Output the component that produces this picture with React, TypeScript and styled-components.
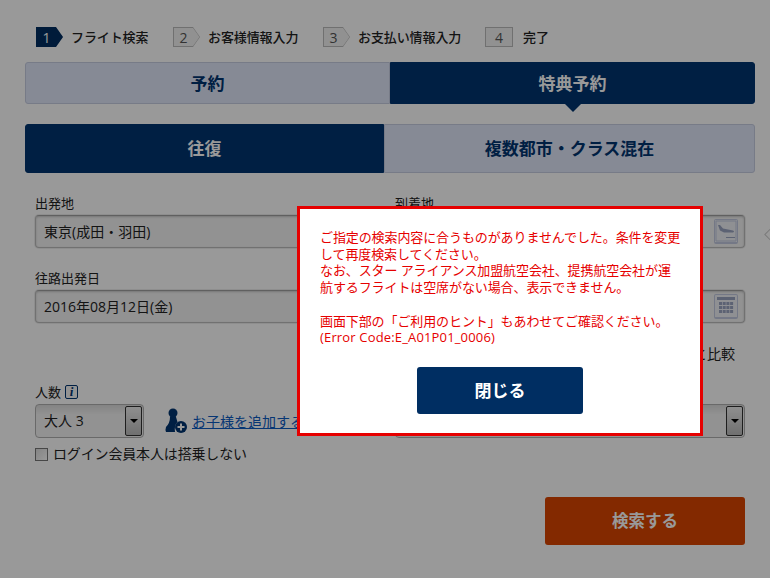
import React from 'react'
import styled, { createGlobalStyle } from 'styled-components'

const GlobalStyle = createGlobalStyle`
    html, body {
        margin: 0;
        padding: 0;
        height: 578px;
        overflow: hidden;
        background: #fff;
        font-family: "Open Sans", "Noto Sans CJK JP", sans-serif;
        color: #222;
    }
    * {
        box-sizing: border-box;
    }
`

const Page = styled.div`
    width: 770px;
    height: 578px;
    padding: 27px 15px 0 25px;
`

const Stepper = styled.div`
    display: flex;
    align-items: center;
    height: 20px;
    padding-left: 11px;
    margin-bottom: 15px;
`

const Step = styled.div<{ $width: number }>`
    display: flex;
    align-items: center;
    width: ${(props) => props.$width}px;
`

const StepLabel = styled.span`
    margin-top: -2px;
    font-size: 13px;
    font-weight: 500;
    letter-spacing: -0.1px;
    color: #222;
`

const arrowShape = 'polygon(0 0, 20px 0, 27px 50%, 20px 100%, 0 100%)'
const innerShape = 'polygon(0 0, 19px 0, 25.5px 50%, 19px 100%, 0 100%)'

const StepBadge = styled.span<{ $active?: boolean }>`
    position: relative;
    flex: none;
    display: flex;
    align-items: center;
    justify-content: center;
    width: 27px;
    height: 20px;
    padding-right: 6px;
    margin-right: 8px;
    font-size: 14px;
    background: ${(props) => (props.$active ? '#002e62' : '#bbb')};
    color: ${(props) => (props.$active ? '#fff' : '#555')};
    clip-path: ${arrowShape};
    &::before {
        content: '';
        position: absolute;
        inset: 1px 0 1px 1px;
        background: ${(props) => (props.$active ? '#002e62' : '#f2f2f2')};
        clip-path: ${innerShape};
    }
`

const LastBadge = styled.span`
    flex: none;
    display: flex;
    align-items: center;
    justify-content: center;
    width: 28px;
    height: 20px;
    margin-right: 10px;
    font-size: 14px;
    background: #f2f2f2;
    color: #555;
    border: 1px solid #bbb;
`

const StepNumber = styled.span`
    position: relative;
`

const TabRow = styled.div<{ $height: number; $split: number; $gap: number }>`
    display: grid;
    grid-template-columns: ${(props) => props.$split}px 1fr;
    height: ${(props) => props.$height}px;
    margin-bottom: ${(props) => props.$gap}px;
`

const Tab = styled.div<{ $active?: boolean; $side: 'left' | 'right' }>`
    position: relative;
    display: flex;
    align-items: center;
    justify-content: center;
    padding-bottom: 2px;
    font-size: 17px;
    font-weight: 700;
    background: ${(props) => (props.$active ? '#003470' : '#e0e6f8')};
    color: ${(props) => (props.$active ? '#fff' : '#003470')};
    border: 1px solid ${(props) => (props.$active ? '#003470' : '#c6cde2')};
    border-radius: ${(props) => (props.$side === 'left' ? '3px 0 0 3px' : '0 3px 3px 0')};
`

const TabPointer = styled.span`
    position: absolute;
    left: 50%;
    bottom: -9px;
    margin-left: -8px;
    border-left: 8px solid transparent;
    border-right: 8px solid transparent;
    border-top: 8px solid #003470;
`

const Form = styled.div`
    display: grid;
    grid-template-columns: 320px 350px;
    column-gap: 40px;
    padding: 0 10px;
`

const FieldBlock = styled.div`
    height: 75px;
`

const Label = styled.div`
    display: flex;
    align-items: center;
    gap: 4px;
    height: 18px;
    margin-bottom: 3px;
    font-size: 13px;
    line-height: 18px;
    color: #222;
`

const InfoMark = styled.span`
    display: flex;
    align-items: center;
    justify-content: center;
    width: 13px;
    height: 14px;
    border: 1.5px solid #003470;
    border-radius: 2px;
    background: #f5f5f5;
    color: #003470;
    font-family: "Liberation Serif", serif;
    font-style: italic;
    font-weight: 700;
    font-size: 13px;
`

const Input = styled.div`
    display: flex;
    align-items: center;
    justify-content: space-between;
    height: 33px;
    padding: 0 3px 2px 8px;
    border: 1px solid #bcbcbc;
    border-top-color: #a0a0a0;
    border-radius: 4px;
    background: #f3f3f3;
    box-shadow: inset 0 1px 2px rgba(0, 0, 0, 0.18), 0 0 0 1px rgba(0, 0, 0, 0.07);
    font-size: 14px;
    color: #222;
`

const IconButton = styled.span`
    display: flex;
    align-items: center;
    justify-content: center;
    width: 24px;
    height: 25px;
    margin: 2px 3px 0 0;
    border: 1px solid #c2c9df;
    border-bottom-width: 2px;
    border-radius: 2px;
    background: #eef0f6;
`

const CompareRow = styled.div`
    grid-column: 1 / 3;
    height: 39px;
    padding-right: 10px;
    text-align: right;
    font-size: 14px;
    line-height: 20px;
    color: #222;
`

const PassengerRow = styled.div`
    display: flex;
    align-items: center;
    gap: 21px;
    width: 320px;
    white-space: nowrap;
`

const SelectBox = styled.div<{ $width: string }>`
    display: flex;
    align-items: center;
    justify-content: space-between;
    width: ${(props) => props.$width};
    height: 34px;
    padding: 1px 1px 1px 8px;
    border: 1px solid #b0b0b0;
    border-radius: 4px;
    background: linear-gradient(#dcdcdc, #f4f4f4 30%, #f4f4f4);
    font-size: 14px;
    color: #222;
`

const SelectArrow = styled.span`
    display: flex;
    align-items: center;
    justify-content: center;
    width: 17px;
    height: 100%;
    border: 1px solid #333;
    border-radius: 2px;
    background: linear-gradient(#eee, #bbb);
    &::after {
        content: '';
        border-left: 4px solid transparent;
        border-right: 4px solid transparent;
        border-top: 4px solid #000;
    }
`

const SelectText = styled.span`
    margin-top: -2px;
`

const AddChild = styled.span`
    display: flex;
    align-items: center;
    gap: 5px;
`

const AddChildLink = styled.a`
    font-size: 14px;
    color: #0a5ac2;
    text-decoration: underline;
`

const CheckRow = styled.label`
    display: flex;
    align-items: center;
    gap: 5px;
    margin-top: 6px;
    font-size: 14px;
    line-height: 20px;
    letter-spacing: -0.15px;
    color: #222;
`

const CheckBox = styled.span`
    width: 13px;
    height: 13px;
    border: 1px solid #777;
    background: linear-gradient(135deg, #ddd, #fff);
`

const SearchRow = styled.div`
    display: flex;
    justify-content: flex-end;
    padding: 33px 10px 0 0;
`

const SearchButton = styled.div`
    display: flex;
    align-items: center;
    justify-content: center;
    width: 200px;
    height: 48px;
    padding-bottom: 2px;
    border-radius: 3px;
    background: #da4500;
    color: #fff;
    font-size: 16.5px;
    font-weight: 700;
`

const SideChevron = styled.span`
    position: absolute;
    left: 766px;
    top: 230px;
    width: 9px;
    height: 9px;
    transform: rotate(45deg);
    border: 1px solid #ccc;
    background: #fff;
`

const Overlay = styled.div`
    position: fixed;
    inset: 0;
    background: rgba(0, 0, 0, 0.4);
`

const Modal = styled.div`
    position: absolute;
    left: 297px;
    top: 206px;
    width: 406px;
    height: 230px;
    padding: 20px 17.5px 0 20px;
    border: 3px solid #e60000;
    background: #fff;
`

const Message = styled.p`
    margin: 0;
    font-size: 13px;
    line-height: 16.7px;
    letter-spacing: -0.1px;
    color: #e60000;
`

const ErrorCode = styled.span`
    letter-spacing: 0.16px;
`

const CloseRow = styled.div`
    display: flex;
    justify-content: center;
    margin: 21px 2.5px 0 0;
`

const CloseButton = styled.button`
    width: 166px;
    height: 47px;
    padding: 0 0 2px;
    border: 0;
    border-radius: 3px;
    background: #002e62;
    color: #fff;
    font-family: inherit;
    font-size: 17px;
    font-weight: 700;
`

const PlaneIcon = () => (
    <svg width="22" height="22" viewBox="0 0 22 22">
        <path d="M1 1 H21 V21 H1 Z" fill="none" stroke="#c2c9df" strokeWidth="1" />
        <path d="M3 5 L5 5 L8 8.5 L13 9.5 L18 10.5 Q20 11.5 18 12.5 L9 12.5 L5 10.5 Z" fill="#9aa3c0" />
        <path d="M11 17.5 H20" stroke="#9aa3c0" strokeWidth="1" />
    </svg>
)

const CalendarIcon = () => (
    <svg width="22" height="22" viewBox="0 0 22 22">
        <rect x="2" y="2" width="18" height="3" fill="#9aa3c0" />
        {[7, 11, 15].map((y) =>
            [4, 7.7, 11.4, 15.1].map((x) => (
                <rect key={`${x}-${y}`} x={x} y={y} width="3" height="3" fill="#9aa3c0" />
            ))
        )}
    </svg>
)

const ChildIcon = () => (
    <svg width="22" height="26" viewBox="0 0 22 26">
        <circle cx="8" cy="5" r="4.5" fill="#003470" />
        <path d="M5 9 H11 L12.5 14 Q9 17 10 24 H1 Q0 22 1 19 Q5 15 5 9 Z" fill="#003470" />
        <circle cx="16" cy="19" r="6" fill="#003470" />
        <path d="M12.5 19 H19.5 M16 15.5 V22.5" stroke="#fff" strokeWidth="2" />
    </svg>
)

const App: React.FC = () => {
    return (
        <>
            <GlobalStyle />
            <Page>
                <Stepper>
                    <Step $width={137}>
                        <StepBadge $active><StepNumber>1</StepNumber></StepBadge>
                        <StepLabel>フライト検索</StepLabel>
                    </Step>
                    <Step $width={150}>
                        <StepBadge><StepNumber>2</StepNumber></StepBadge>
                        <StepLabel>お客様情報入力</StepLabel>
                    </Step>
                    <Step $width={162}>
                        <StepBadge><StepNumber>3</StepNumber></StepBadge>
                        <StepLabel>お支払い情報入力</StepLabel>
                    </Step>
                    <Step $width={70}>
                        <LastBadge>4</LastBadge>
                        <StepLabel>完了</StepLabel>
                    </Step>
                </Stepper>

                <TabRow $height={42} $split={365} $gap={20}>
                    <Tab $side="left">予約</Tab>
                    <Tab $side="right" $active>特典予約<TabPointer /></Tab>
                </TabRow>

                <TabRow $height={49} $split={359} $gap={21}>
                    <Tab $side="left" $active>往復</Tab>
                    <Tab $side="right">複数都市・クラス混在</Tab>
                </TabRow>

                <Form>
                    <FieldBlock>
                        <Label>出発地</Label>
                        <Input>東京(成田・羽田)</Input>
                    </FieldBlock>
                    <FieldBlock>
                        <Label>到着地</Label>
                        <Input><span /><IconButton><PlaneIcon /></IconButton></Input>
                    </FieldBlock>
                    <FieldBlock>
                        <Label>往路出発日</Label>
                        <Input>2016年08月12日(金)</Input>
                    </FieldBlock>
                    <FieldBlock>
                        <Label />
                        <Input><span /><IconButton><CalendarIcon /></IconButton></Input>
                    </FieldBlock>
                    <CompareRow>と比較</CompareRow>
                    <div>
                        <Label>人数<InfoMark>i</InfoMark></Label>
                        <PassengerRow>
                            <SelectBox $width="109px"><SelectText>大人 3</SelectText><SelectArrow /></SelectBox>
                            <AddChild>
                                <ChildIcon />
                                <AddChildLink>お子様を追加する</AddChildLink>
                            </AddChild>
                        </PassengerRow>
                        <CheckRow>
                            <CheckBox />
                            ログイン会員本人は搭乗しない
                        </CheckRow>
                    </div>
                    <div>
                        <Label />
                        <SelectBox $width="350px"><span /><SelectArrow /></SelectBox>
                    </div>
                </Form>

                <SearchRow>
                    <SearchButton>検索する</SearchButton>
                </SearchRow>
            </Page>
            <SideChevron />
            <Overlay>
                <Modal>
                    <Message>
                        ご指定の検索内容に合うものがありませんでした。条件を変更して再度検索してください。
                        <br />
                        なお、スター アライアンス加盟航空会社、提携航空会社が運航するフライトは空席がない場合、表示できません。
                        <br />
                        <br />
                        画面下部の「ご利用のヒント」もあわせてご確認ください。
                        <br />
                        <ErrorCode>(Error Code:E_A01P01_0006)</ErrorCode>
                    </Message>
                    <CloseRow>
                        <CloseButton>閉じる</CloseButton>
                    </CloseRow>
                </Modal>
            </Overlay>
        </>
    )
}

export default App
